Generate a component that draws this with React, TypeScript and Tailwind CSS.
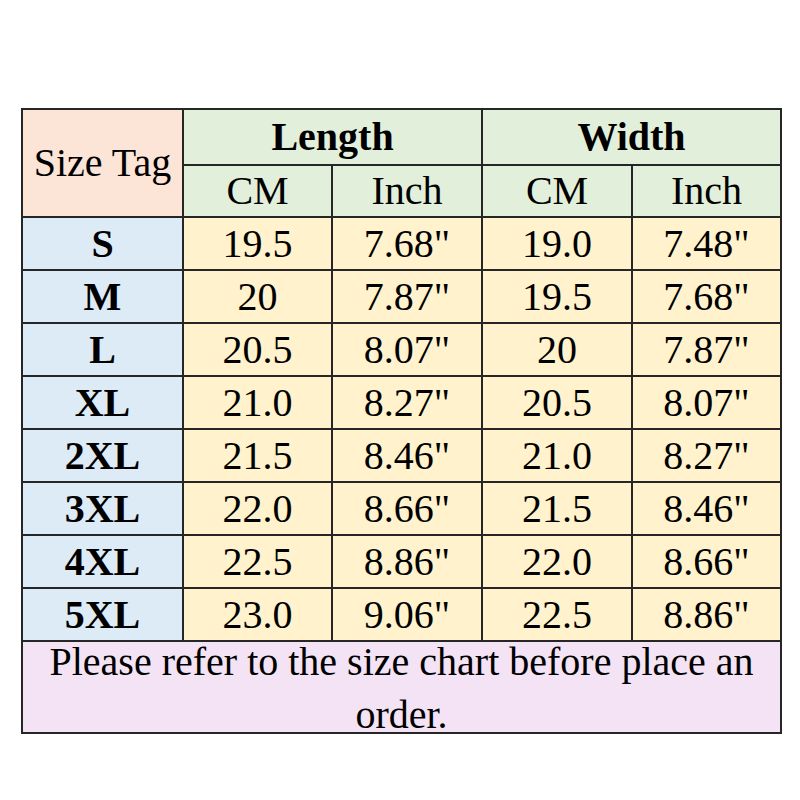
import React from "react";

const rows = [
  ["S", "19.5", '7.68"', "19.0", '7.48"'],
  ["M", "20", '7.87"', "19.5", '7.68"'],
  ["L", "20.5", '8.07"', "20", '7.87"'],
  ["XL", "21.0", '8.27"', "20.5", '8.07"'],
  ["2XL", "21.5", '8.46"', "21.0", '8.27"'],
  ["3XL", "22.0", '8.66"', "21.5", '8.46"'],
  ["4XL", "22.5", '8.86"', "22.0", '8.66"'],
  ["5XL", "23.0", '9.06"', "22.5", '8.86"'],
];

export default function App() {
  const cell = "border-2 border-[#262626] text-center p-0 leading-none";
  return (
    <div
      className="w-[800px] h-[800px] bg-white pt-[108px] pl-[21px] text-black"
      style={{ fontFamily: '"Liberation Serif", "Times New Roman", serif' }}
    >
      <table className="border-collapse table-fixed w-[759px] text-[40px]">
        <colgroup>
          <col className="w-[161px]" />
          <col className="w-[149px]" />
          <col className="w-[150px]" />
          <col className="w-[150px]" />
          <col className="w-[149px]" />
        </colgroup>
        <tbody>
          <tr className="h-[56px]">
            <td rowSpan={2} className={`${cell} bg-[#fce4d6]`}>Size Tag</td>
            <td colSpan={2} className={`${cell} bg-[#e2efda] font-bold`}>Length</td>
            <td colSpan={2} className={`${cell} bg-[#e2efda] font-bold`}>Width</td>
          </tr>
          <tr className="h-[52px]">
            <td className={`${cell} bg-[#e2efda]`}>CM</td>
            <td className={`${cell} bg-[#e2efda]`}>Inch</td>
            <td className={`${cell} bg-[#e2efda]`}>CM</td>
            <td className={`${cell} bg-[#e2efda]`}>Inch</td>
          </tr>
          {rows.map((r) => (
            <tr key={r[0]} className="h-[53px]">
              <td className={`${cell} bg-[#ddebf7] font-bold`}>{r[0]}</td>
              {r.slice(1).map((v, i) => (
                <td key={i} className={`${cell} bg-[#fff2cc]`}>{v}</td>
              ))}
            </tr>
          ))}
          <tr className="h-[92px]">
            <td colSpan={5} className={`${cell} bg-[#f3e3f5] align-top px-1`}>
              <div className="h-[80px] leading-[53px] -mt-[7px]">
                Please refer to the size chart before place an order.
              </div>
            </td>
          </tr>
        </tbody>
      </table>
    </div>
  );
}
